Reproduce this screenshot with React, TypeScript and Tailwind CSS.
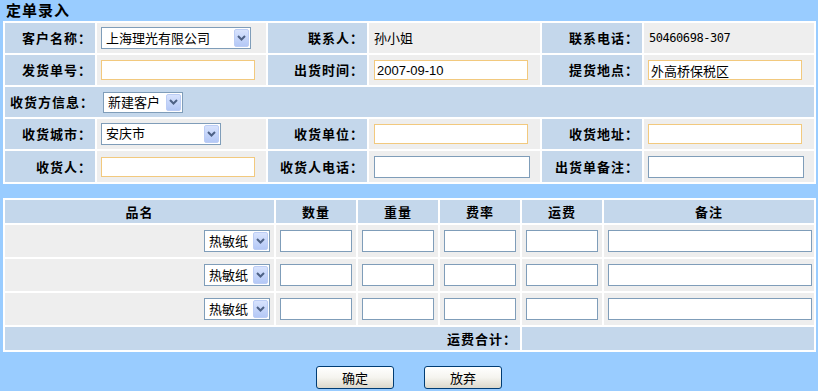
import React from "react";

const LBL = "bg-[#C4D7EB]";
const VAL = "bg-[#EEEEEE]";

function DropBtn() {
  return (
    <div className="w-[15px] self-stretch flex items-center justify-center rounded-[2px] border border-[#BCCDF5] bg-linear-to-b from-[#D8E3FD] to-[#B4C8F6]">
      <svg width="9" height="6" viewBox="0 0 9 6">
        <polyline points="1,1 4.5,4.5 8,1" fill="none" stroke="#4D6185" strokeWidth="2" />
      </svg>
    </div>
  );
}

function Select({ size, text, top }: { size: string; text: string; top?: boolean }) {
  return (
    <div className={`${size} flex border border-[#7F9DB9] bg-white p-[1px]`}>
      <div
        className={`flex-1 flex ${top ? "items-start" : "items-center"} pl-[3px] text-[13px] leading-[16px] text-black whitespace-nowrap`}
      >
        {text}
      </div>
      <DropBtn />
    </div>
  );
}

function Input({ size, color, value, cls }: { size: string; color: string; value?: string; cls?: string }) {
  return (
    <input
      readOnly
      value={value ?? ""}
      className={`${size} ${color} border bg-white px-[2px] text-[13px] text-black outline-none ${cls ?? ""}`}
    />
  );
}

function Label({ children }: { children: React.ReactNode }) {
  return (
    <div className={`${LBL} flex items-center justify-end pr-[3px] text-[13px] font-bold tracking-[1px] text-black whitespace-nowrap`}>
      {children}
    </div>
  );
}

function Val({ children, pl }: { children?: React.ReactNode; pl?: string }) {
  return <div className={`${VAL} flex items-center ${pl ?? "pl-[4px]"} text-[13px] text-black`}>{children}</div>;
}

const ORANGE = "border-[#F2C97E]";
const BLUE = "border-[#7F9DB9]";

function ItemRow() {
  return (
    <>
      <div className={`${VAL} flex items-center justify-end pr-[4px]`}>
        <Select size="w-[66px] h-[22px]" text="热敏纸" />
      </div>
      <div className={`${VAL} flex items-center pl-[4px]`}>
        <Input size="w-[72px] h-[22px]" color={BLUE} />
      </div>
      <div className={`${VAL} flex items-center pl-[4px]`}>
        <Input size="w-[72px] h-[22px]" color={BLUE} />
      </div>
      <div className={`${VAL} flex items-center pl-[4px]`}>
        <Input size="w-[72px] h-[22px]" color={BLUE} />
      </div>
      <div className={`${VAL} flex items-center pl-[4px]`}>
        <Input size="w-[72px] h-[22px]" color={BLUE} />
      </div>
      <div className={`${VAL} flex items-center pl-[4px]`}>
        <Input size="w-[204px] h-[22px]" color={BLUE} />
      </div>
    </>
  );
}

function Header({ children }: { children: React.ReactNode }) {
  return (
    <div className={`${LBL} flex items-center justify-center text-[13px] font-bold tracking-[1px] text-black`}>
      {children}
    </div>
  );
}

export default function App() {
  return (
    <div className="w-[818px] h-[391px] bg-[#99CCFF] font-['Noto_Sans_CJK_SC',sans-serif] overflow-hidden">
      <div className="h-[21px] pl-[6px] text-[15px] leading-[19px] font-bold tracking-[1px] text-black">定单录入</div>

      <div className="ml-[3px] w-[813px] bg-white p-[2px] grid grid-cols-[90px_169px_99px_171px_100px_170px] grid-rows-[30px_30px_30px_30px_31px] gap-[2px]">
        <Label>客户名称：</Label>
        <Val>
          <Select size="w-[150px] h-[22px]" text="上海理光有限公司" />
        </Val>
        <Label>联系人：</Label>
        <Val pl="pl-[5px]">孙小姐</Val>
        <Label>联系电话：</Label>
        <Val pl="pl-[5px]">
          <span className="font-['DejaVu_Sans_Mono',monospace] text-[12px] tracking-[-0.45px]">50460698-307</span>
        </Val>

        <Label>发货单号：</Label>
        <Val>
          <Input size="w-[154px] h-[20px]" color={ORANGE} />
        </Val>
        <Label>出货时间：</Label>
        <Val pl="pl-[5px]">
          <Input
            size="w-[154px] h-[20px]"
            color={ORANGE}
            value="2007-09-10"
            cls="font-['Liberation_Sans',sans-serif] px-[1px]"
          />
        </Val>
        <Label>提货地点：</Label>
        <Val>
          <Input size="w-[154px] h-[20px]" color={ORANGE} value="外高桥保税区" />
        </Val>

        <div className={`${LBL} col-span-6 flex items-center pl-[5px]`}>
          <span className="w-[93px] shrink-0 text-[13px] font-bold tracking-[1px] text-black whitespace-nowrap">收货方信息：</span>
          <Select size="w-[80px] h-[21px]" text="新建客户" />
        </div>

        <Label>收货城市：</Label>
        <Val>
          <Select size="w-[120px] h-[22px]" text="安庆市" top />
        </Val>
        <Label>收货单位：</Label>
        <Val pl="pl-[5px]">
          <Input size="w-[154px] h-[20px]" color={ORANGE} />
        </Val>
        <Label>收货地址：</Label>
        <Val>
          <Input size="w-[154px] h-[20px]" color={ORANGE} />
        </Val>

        <Label>收货人：</Label>
        <Val>
          <Input size="w-[154px] h-[20px]" color={ORANGE} />
        </Val>
        <Label>收货人电话：</Label>
        <Val pl="pl-[5px]">
          <Input size="w-[156px] h-[22px]" color={BLUE} />
        </Val>
        <Label>出货单备注：</Label>
        <Val>
          <Input size="w-[156px] h-[22px]" color={BLUE} />
        </Val>
      </div>

      <div className="mt-[14px] ml-[3px] w-[813px] bg-white p-[2px] grid grid-cols-[269px_80px_80px_80px_80px_210px] grid-rows-[23px_32px_32px_32px_23px] gap-[2px]">
        <Header>品名</Header>
        <Header>数量</Header>
        <Header>重量</Header>
        <Header>费率</Header>
        <Header>运费</Header>
        <Header>备注</Header>
        <ItemRow />
        <ItemRow />
        <ItemRow />
        <div className={`${LBL} col-span-4 flex items-center justify-end pr-[3px] text-[13px] font-bold tracking-[1px] text-black`}>
          运费合计：
        </div>
        <div className={`${LBL} col-span-2`} />
      </div>

      <div className="mt-[14px] flex justify-center gap-[30px]">
        <button className="w-[78px] h-[23px] rounded-[3px] border border-[#003C74] bg-linear-to-b from-white via-[#F5F4EF] to-[#DCD8CB] text-[13px] text-black leading-none">
          确定
        </button>
        <button className="w-[78px] h-[23px] rounded-[3px] border border-[#003C74] bg-linear-to-b from-white via-[#F5F4EF] to-[#DCD8CB] text-[13px] text-black leading-none">
          放弃
        </button>
      </div>
    </div>
  );
}
